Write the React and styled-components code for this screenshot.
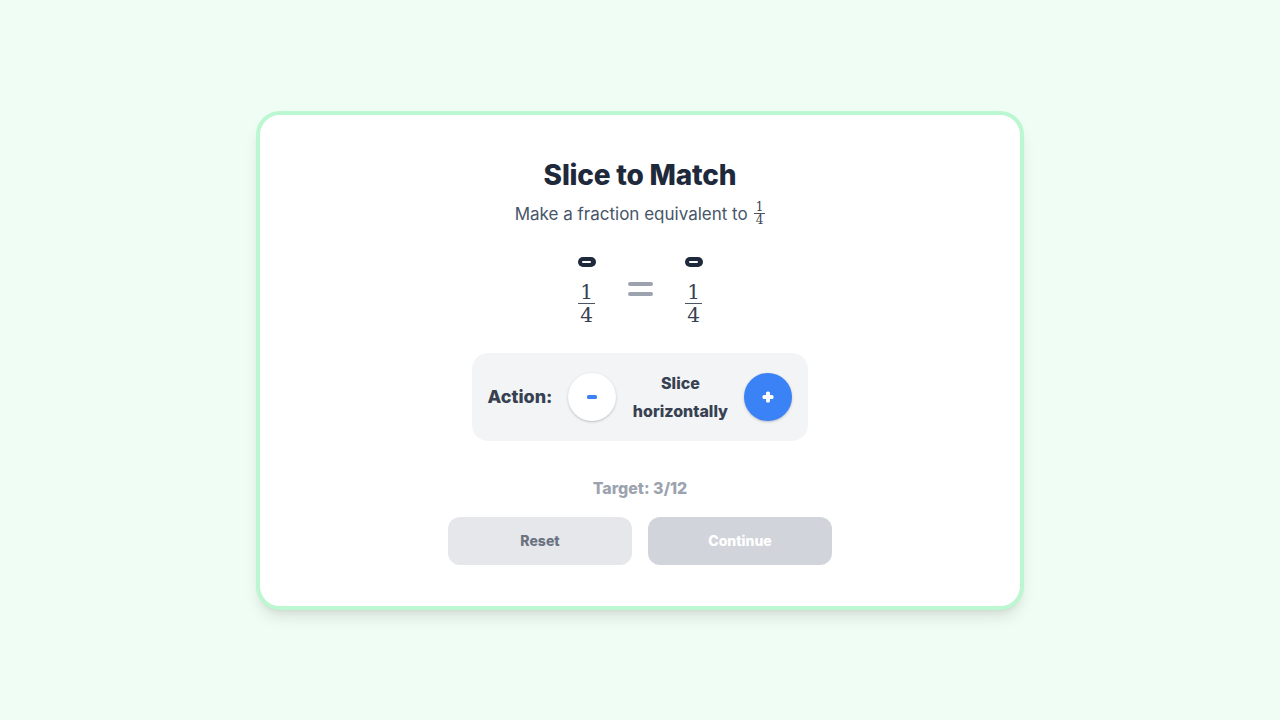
import React from "react";
import styled, { createGlobalStyle } from "styled-components";

const Global = createGlobalStyle`
  html, body { margin: 0; padding: 0; }
  body {
    background: #f0fdf4;
    font-family: "Inter", "Noto Sans", sans-serif;
    color: #1f2937;
  }
`;

const Page = styled.div`
  width: 1280px;
  height: 720px;
  display: flex;
  align-items: center;
  justify-content: center;
`;

const Card = styled.div`
  box-sizing: border-box;
  width: 768px;
  background: #fff;
  border: 4px solid #bbf7d0;
  border-radius: 24px;
  box-shadow: 0 10px 15px -3px rgba(0,0,0,0.1), 0 4px 6px -4px rgba(0,0,0,0.1);
  padding: 42px 32px 41px;
  display: flex;
  flex-direction: column;
  align-items: center;
`;

const Title = styled.h1`
  margin: 0;
  font-size: 28px;
  line-height: 36px;
  font-weight: 800;
  color: #1e293b;
  letter-spacing: -0.2px;
`;

const Subtitle = styled.p`
  margin: 7px 0 0;
  font-size: 17px;
  line-height: 28px;
  color: #475569;
  display: flex;
  align-items: center;
  gap: 6px;
`;

const Frac = styled.span`
  display: inline-flex;
  flex-direction: column;
  align-items: center;
  font-family: "DejaVu Serif", "Liberation Serif", serif;
  color: #374151;
  font-size: ${p => (p.$small ? "12px" : "20px")};
  line-height: ${p => (p.$small ? "12px" : "22px")};
`;

const Num = styled.span`
  padding: 0 2px;
  border-bottom: ${p => (p.$small ? "1px" : "1.5px")} solid #4b5563;
`;

const Den = styled.span`
  padding: 0 2px;
`;

const Equation = styled.div`
  margin-top: 29px;
  display: flex;
  align-items: center;
  gap: 21px;
`;

const Side = styled.div`
  display: flex;
  flex-direction: column;
  align-items: center;
  gap: 14px;
  width: 40px;
`;

const Pill = styled.span`
  width: 18px;
  height: 10px;
  border-radius: 5px;
  background: #1e293b;
  display: flex;
  align-items: center;
  justify-content: center;
  &::after {
    content: "";
    width: 9px;
    height: 2px;
    border-radius: 1px;
    background: #fff;
  }
`;

const Equals = styled.div`
  display: flex;
  flex-direction: column;
  gap: 6px;
  margin-top: -4px;
  span {
    width: 25px;
    height: 4px;
    border-radius: 2px;
    background: #9ca3af;
  }
`;

const ActionPanel = styled.div`
  margin-top: 27px;
  background: #f3f4f6;
  border-radius: 16px;
  padding: 16px;
  display: flex;
  align-items: center;
  gap: 16px;
`;

const Label = styled.span`
  font-size: 18px;
  font-weight: 800;
  color: #374151;
`;

const Circle = styled.button`
  width: 48px;
  height: 48px;
  border-radius: 50%;
  border: none;
  padding: 0;
  display: flex;
  align-items: center;
  justify-content: center;
  background: ${p => (p.$primary ? "#3b82f6" : "#fff")};
  box-shadow: 0 1px 3px rgba(0,0,0,0.15), 0 1px 2px rgba(0,0,0,0.08);
`;

const Mode = styled.span`
  width: 96px;
  text-align: center;
  font-size: 16px;
  line-height: 28px;
  font-weight: 800;
  color: #374151;
`;

const Target = styled.div`
  margin-top: 35px;
  font-size: 16px;
  line-height: 24px;
  font-weight: 800;
  color: #9ca3af;
`;

const Buttons = styled.div`
  margin-top: 17px;
  display: flex;
  gap: 16px;
`;

const Btn = styled.button`
  width: 184px;
  height: 48px;
  border: none;
  border-radius: 12px;
  font-family: inherit;
  font-size: 14px;
  font-weight: 800;
  background: ${p => (p.$variant === "primary" ? "#d1d5db" : "#e5e7eb")};
  color: ${p => (p.$variant === "primary" ? "#fff" : "#6b7280")};
`;

const Fraction = ({ n, d, small }) => (
  <Frac $small={small}>
    <Num $small={small}>{n}</Num>
    <Den>{d}</Den>
  </Frac>
);

export default function App() {
  return (
    <>
      <Global />
      <Page>
        <Card>
          <Title>Slice to Match</Title>
          <Subtitle>
            Make a fraction equivalent to <Fraction n="1" d="4" small />
          </Subtitle>
          <Equation>
            <Side>
              <Pill />
              <Fraction n="1" d="4" />
            </Side>
            <Equals>
              <span />
              <span />
            </Equals>
            <Side>
              <Pill />
              <Fraction n="1" d="4" />
            </Side>
          </Equation>
          <ActionPanel>
            <Label>Action:</Label>
            <Circle aria-label="decrease">
              <svg width="10" height="6" viewBox="0 0 10 6">
                <rect x="0" y="1" width="10" height="4" rx="1.5" fill="#3b82f6" />
              </svg>
            </Circle>
            <Mode>Slice horizontally</Mode>
            <Circle $primary aria-label="increase">
              <svg width="12" height="12" viewBox="0 0 12 12">
                <rect x="4" y="0.5" width="4" height="11" rx="1.5" fill="#fff" />
                <rect x="0.5" y="4" width="11" height="4" rx="1.5" fill="#fff" />
              </svg>
            </Circle>
          </ActionPanel>
          <Target>Target: 3/12</Target>
          <Buttons>
            <Btn>Reset</Btn>
            <Btn $variant="primary">Continue</Btn>
          </Buttons>
        </Card>
      </Page>
    </>
  );
}
